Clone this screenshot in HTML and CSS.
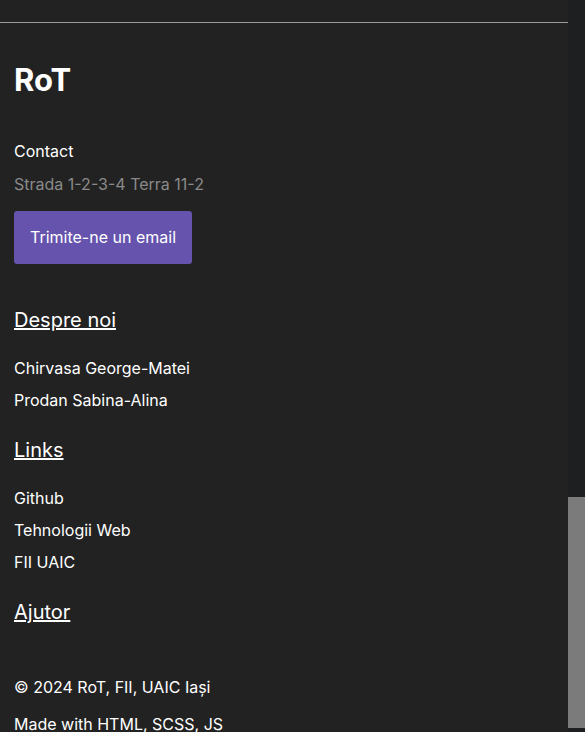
FILE: index.html
```html
<!DOCTYPE html>
<html lang="ro">
<head>
<meta charset="utf-8">
<title>RoT</title>
<link rel="stylesheet" href="styles.css">
</head>
<body>
<div class="viewport">
  <div class="page">
    <div class="page-end"></div>
    <footer class="footer">
      <h2 class="brand">RoT</h2>
      <section class="contact">
        <p class="label">Contact</p>
        <p class="address">Strada 1-2-3-4 Terra 11-2</p>
        <a class="btn" href="#">Trimite-ne un email</a>
      </section>
      <section class="group">
        <a class="group-title" href="#">Despre noi</a>
        <ul class="items">
          <li>Chirvasa George-Matei</li>
          <li>Prodan Sabina-Alina</li>
        </ul>
      </section>
      <section class="group">
        <a class="group-title" href="#">Links</a>
        <ul class="items">
          <li><a href="#">Github</a></li>
          <li><a href="#">Tehnologii Web</a></li>
          <li><a href="#">FII UAIC</a></li>
        </ul>
      </section>
      <section class="group">
        <a class="group-title" href="#">Ajutor</a>
      </section>
      <div class="legal">
        <p class="copy">© 2024 RoT, FII, UAIC Iași</p>
        <p class="made">Made with HTML, SCSS, JS</p>
      </div>
    </footer>
  </div>
  <div class="scrollbar"><div class="thumb"></div></div>
</div>
</body>
</html>
```
FILE: styles.css
```css
* { box-sizing: border-box; }
html, body { margin: 0; padding: 0; }
body {
  background: #222222;
  color: #ffffff;
  font-family: "Inter", "Noto Sans", sans-serif;
  height: 732px;
  overflow: hidden;
}
.viewport {
  display: flex;
  height: 732px;
}
.page {
  flex: 1;
  min-width: 0;
}
.page-end {
  height: 23px;
  border-bottom: 1px solid #9a9a9a;
}
.footer {
  padding: 37px 14px 0;
}
.brand {
  margin: 0;
  font-size: 31px;
  line-height: 40px;
  font-weight: 700;
}
.contact {
  margin-top: 35px;
  display: flex;
  flex-direction: column;
  align-items: flex-start;
}
.label, .address {
  margin: 0;
  font-size: 16px;
  line-height: 32px;
}
.address {
  margin-top: 1px;
  color: #8a8a8a;
}
.btn {
  margin-top: 11px;
  display: inline-block;
  padding: 16px;
  font-size: 16px;
  line-height: 21px;
  background: #6553ad;
  color: #ffffff;
  border-radius: 3px;
  text-decoration: none;
}
.group {
  margin-top: 40px;
}
.group + .group { margin-top: 18px; }
.group-title {
  display: block;
  font-size: 20px;
  line-height: 32px;
  color: #ffffff;
  text-decoration: underline;
  width: max-content;
}
.items {
  list-style: none;
  margin: 16px 0 0;
  padding: 0;
}
.items li {
  font-size: 16px;
  line-height: 32px;
}
.items a {
  color: #ffffff;
  text-decoration: none;
}
.legal {
  margin-top: 43px;
}
.copy, .made {
  margin: 0;
  font-size: 16px;
  line-height: 32px;
}
.made { margin-top: 5px; }
.scrollbar {
  width: 17px;
  flex: none;
  background: #1e1f20;
  display: flex;
  flex-direction: column;
  justify-content: flex-end;
  padding-bottom: 4px;
}
.thumb {
  height: 231px;
  background: #7b7b7b;
}
```
